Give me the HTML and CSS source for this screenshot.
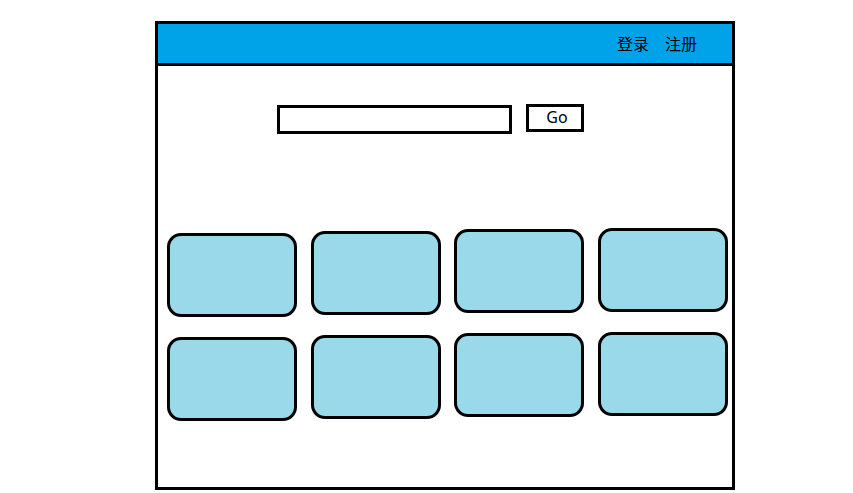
FILE: index.html
```html
<!DOCTYPE html>
<html lang="zh">
<head>
<meta charset="utf-8">
<title>Wireframe</title>
<link rel="stylesheet" href="styles.css">
</head>
<body>
<div class="frame">
  <header class="topbar">
    <a class="nav-link">登录</a>
    <a class="nav-link">注册</a>
  </header>
  <div class="search">
    <div class="search-input"></div>
    <div class="search-btn">Go</div>
  </div>
  <div class="grid">
    <div class="card c1"></div>
    <div class="card c2"></div>
    <div class="card c3"></div>
    <div class="card c4"></div>
    <div class="card c1"></div>
    <div class="card c2"></div>
    <div class="card c3"></div>
    <div class="card c4"></div>
  </div>
</div>
</body>
</html>
```
FILE: styles.css
```css
html, body {
  margin: 0;
  padding: 0;
  background: #ffffff;
}
body {
  font-family: "Noto Sans", "Noto Sans CJK SC", sans-serif;
  color: #000;
}
.frame {
  box-sizing: border-box;
  margin: 21px 0 0 155px;
  width: 580px;
  height: 469px;
  border: 3px solid #000;
}
.topbar {
  box-sizing: border-box;
  height: 42px;
  background: #00a2e8;
  border-bottom: 3px solid #000;
  display: flex;
  justify-content: flex-end;
  align-items: center;
  gap: 16px;
  padding: 0 35px 1px 0;
}
.nav-link {
  font-family: "Noto Sans CJK SC", sans-serif;
  font-size: 16px;
  line-height: 20px;
  color: #000;
}
.search {
  display: flex;
  align-items: flex-start;
  gap: 14px;
  margin-top: 39px;
  padding-left: 119px;
}
.search-input {
  box-sizing: border-box;
  width: 235px;
  height: 29px;
  border: 3px solid #000;
  background: #fff;
}
.search-btn {
  box-sizing: border-box;
  width: 58px;
  height: 28px;
  margin-top: -1px;
  border: 3px solid #000;
  background: #fff;
  font-size: 16px;
  line-height: 21px;
  text-align: center;
  padding-left: 4px;
}
.grid {
  display: grid;
  grid-template-columns: repeat(4, 130px);
  column-gap: 13.5px;
  row-gap: 20px;
  margin-top: 96px;
  padding-left: 9px;
}
.card {
  box-sizing: border-box;
  height: 84px;
  border: 3px solid #000;
  border-radius: 14px;
  background: #99d9ea;
}
.c1 { margin-top: 3px; margin-bottom: -3px; }
.c2 { margin-top: 1px; margin-bottom: -1px; }
.c3 { margin-top: -1px; margin-bottom: 1px; }
.c4 { margin-top: -2px; margin-bottom: 2px; }
```
